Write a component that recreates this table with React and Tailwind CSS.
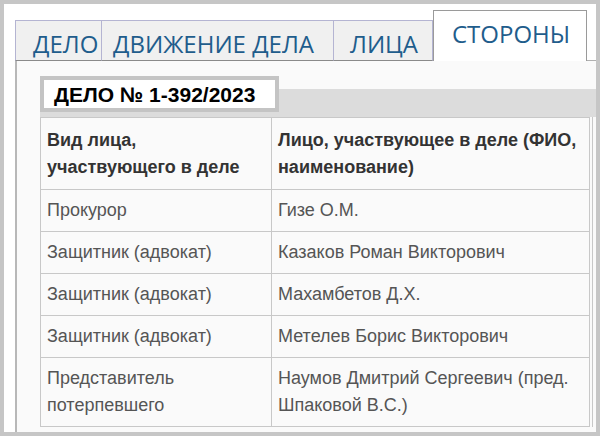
import React from 'react';

const rows = [
    ['Прокурор', 'Гизе О.М.'],
    ['Защитник (адвокат)', 'Казаков Роман Викторович'],
    ['Защитник (адвокат)', 'Махамбетов Д.Х.'],
    ['Защитник (адвокат)', 'Метелев Борис Викторович'],
    ['Представитель potерпевшего', 'Наумов Дмитрий Сергеевич (пред. Шпаковой В.С.)'],
];

const tabs = [
    { name: 'ДЕЛО', cls: 'w-[87px] pl-[17px] border-l' },
    { name: 'ДВИЖЕНИЕ ДЕЛА', cls: 'w-[232px] pl-[11px]' },
    { name: 'ЛИЦА', cls: 'w-[99px] pl-[16px]' },
];

const App = () => {
    return (
        <div className='w-[600px] h-[436px] overflow-hidden border-4 border-[#c6c6c6] bg-white flex flex-col pl-[11px] pt-[6px]'>
            {/* Tabs */}
            <div className='flex flex-row items-end h-[51px] font-["Open_Sans",sans-serif] text-[24px] text-[#1f5d8c]'>
                {tabs.map((t) => (
                    <div key={t.name} className={`${t.cls} h-[41px] shrink-0 bg-[#f0f0f0] border-t border-r border-b border-[#b4b4d2] border-b-[#8a8a8a] flex items-center pt-[6px] leading-none whitespace-nowrap`}>
                        {t.name}
                    </div>
                ))}
                <div className='w-[154px] h-[51px] shrink-0 bg-white border border-[#9a9a9a] border-b-0 pl-[18px] pt-[11px] leading-none whitespace-nowrap'>
                    СТОРОНЫ
                </div>
                <div className='flex-1 h-full border-b border-[#b0b0b0]'></div>
            </div>

            {/* Panel */}
            <div className='flex-1 bg-[#fafafa] border-l-2 border-[#b8b8b8] pl-[23px] pt-[15px] font-["Liberation_Sans",Arial,sans-serif]'>
                <div className='bg-[#dcdcdc] h-[28px] mt-[13px] flex items-start'>
                    <div className='-mt-[13px] h-[36px] w-[239px] bg-white border-4 border-[#c4c4c4] flex items-center pl-[10px] text-[21px] font-bold text-black leading-none whitespace-nowrap'>
                        ДЕЛО № 1-392/2023
                    </div>
                </div>
                <div className='w-[553px] border-r border-[#c8c8c8] pr-[2px]'>
                    <table className='w-[550px] border-collapse text-[18px] leading-[27px]'>
                        <thead>
                            <tr>
                                <th className='w-[231px] border border-[#c8c8c8] text-left align-top font-bold text-[#333] px-[6px] pt-[9px] pb-[8px]'>
                                    Вид лица,<br />участвующего в деле
                                </th>
                                <th className='border border-[#c8c8c8] text-left align-top font-bold text-[#333] px-[6px] pt-[9px] pb-[8px]'>
                                    Лицо, участвующее в деле (ФИО,<br />наименование)
                                </th>
                            </tr>
                        </thead>
                        <tbody>
                            {rows.map((r, i) => (
                                <tr key={i}>
                                    <td className='border border-[#c8c8c8] align-top text-[#555] px-[6px] py-[7px] whitespace-nowrap'>
                                        {i === 4 ? <>Представитель<br />потерпевшего</> : r[0]}
                                    </td>
                                    <td className='border border-[#c8c8c8] align-top text-[#555] px-[6px] py-[7px] whitespace-nowrap'>
                                        {i === 4 ? <>Наумов Дмитрий Сергеевич (пред.<br />Шпаковой В.С.)</> : r[1]}
                                    </td>
                                </tr>
                            ))}
                        </tbody>
                    </table>
                </div>
            </div>
        </div>
    );
};

export default App;
